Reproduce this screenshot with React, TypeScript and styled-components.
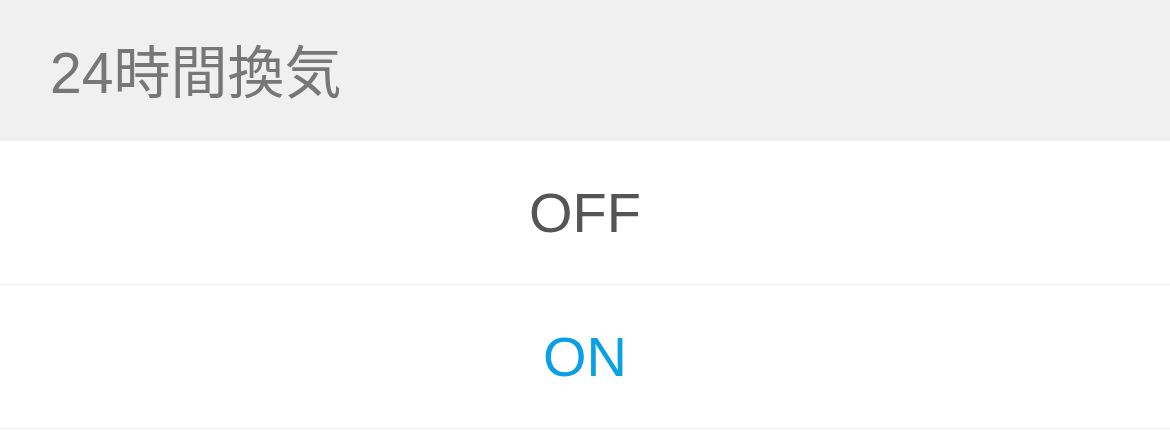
import React from 'react'
import styled, { createGlobalStyle } from 'styled-components'

const GlobalStyle = createGlobalStyle`
  html, body {
    margin: 0;
    padding: 0;
    background: #ffffff;
  }
  body {
    font-family: "Liberation Sans", "Noto Sans CJK JP", sans-serif;
  }
`

const Sheet = styled.div`
  display: flex;
  flex-direction: column;
  width: 1170px;
`

const Header = styled.div`
  display: flex;
  align-items: center;
  height: 141px;
  padding: 0 0 5px 50px;
  box-sizing: border-box;
  background: #f0f0f0;
  color: #777777;
  font-size: 57px;
`

const Option = styled.div<{ $active?: boolean }>`
  display: flex;
  align-items: center;
  justify-content: center;
  height: 144px;
  box-sizing: border-box;
  border-bottom: 1px solid #efefef;
  font-size: 56px;
  color: ${(p) => (p.$active ? '#0aa0e6' : '#555555')};
`

const options = [
  { label: 'OFF', active: false },
  { label: 'ON', active: true },
]

const App: React.FC = () => {
  return (
    <>
      <GlobalStyle />
      <Sheet>
        <Header>24時間換気</Header>
        {options.map((o) => (
          <Option key={o.label} $active={o.active}>
            {o.label}
          </Option>
        ))}
      </Sheet>
    </>
  )
}

export default App
